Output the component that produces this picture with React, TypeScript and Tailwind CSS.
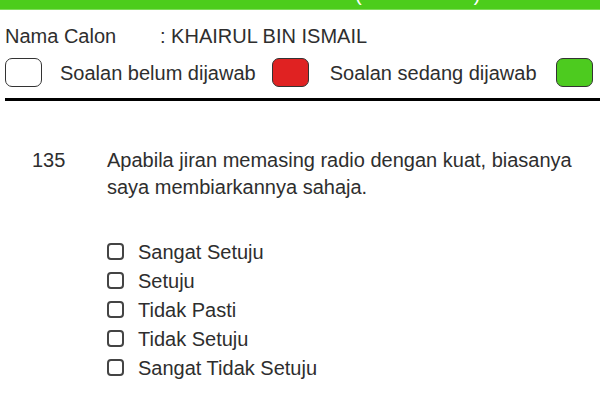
import React from "react";

const options = ["Sangat Setuju", "Setuju", "Tidak Pasti", "Tidak Setuju", "Sangat Tidak Setuju"];

export default function App() {
  return (
    <div className="w-[600px] h-[405px] bg-white overflow-hidden text-[#2e2e2e] font-['Liberation_Sans',Arial,sans-serif] text-[20px]">
      <div className="h-[10px] bg-[#4ccd1b] overflow-hidden border-b border-[#7fdc5a]">
        <div className="flex text-white text-[20px] leading-[20px] -mt-[16px] pl-[355px] gap-[112px]">
          <span>(</span>
          <span>)</span>
        </div>
      </div>
      <div className="pl-[5px]">
        <div className="flex items-center h-[28px] leading-[28px] mt-[12px]">
          <span className="w-[155px]">Nama Calon</span>
          <span>: KHAIRUL BIN ISMAIL</span>
        </div>
        <div className="flex items-center h-[29px] mt-[8px] whitespace-nowrap">
          <div className="w-[37px] h-[29px] rounded-[7px] border-[1.5px] border-[#333] bg-white shrink-0" />
          <span className="ml-[18px]">Soalan belum dijawab</span>
          <div className="ml-[16px] w-[37px] h-[29px] rounded-[7px] border-[1.5px] border-[#333] bg-[#e02222] shrink-0" />
          <span className="ml-[21px]">Soalan sedang dijawab</span>
          <div className="ml-[19px] w-[37px] h-[29px] rounded-[7px] border-[1.5px] border-[#333] bg-[#4dcb1f] shrink-0" />
        </div>
        <div className="h-[3px] bg-black mt-[11px]" />
      </div>
      <div className="flex mt-[46px] leading-[27px]">
        <span className="w-[107px] pl-[32px] shrink-0">135</span>
        <p className="w-[485px]">Apabila jiran memasing radio dengan kuat, biasanya saya membiarkannya sahaja.</p>
      </div>
      <div className="mt-[36px] pl-[107px] flex flex-col">
        {options.map((o) => (
          <label key={o} className="flex items-center h-[29px]">
            <span className="w-[17px] h-[17px] rounded-[4px] border-2 border-[#444] shrink-0" />
            <span className="ml-[14px]">{o}</span>
          </label>
        ))}
      </div>
    </div>
  );
}
